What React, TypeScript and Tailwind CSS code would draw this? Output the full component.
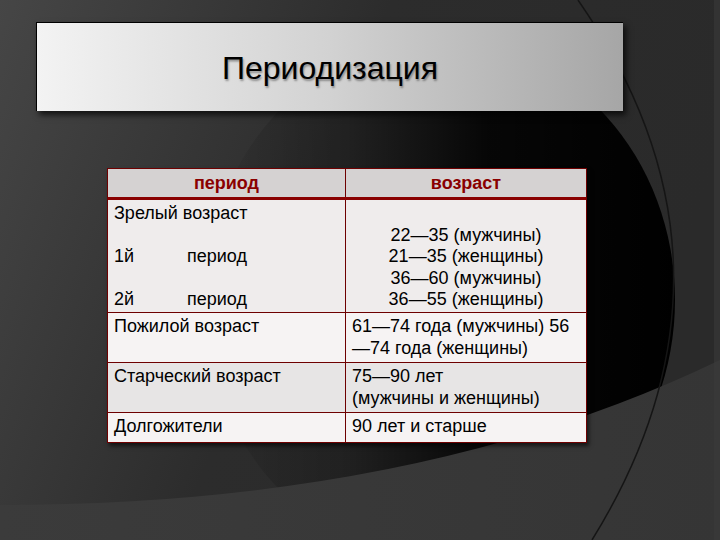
const font = { fontFamily: '"Liberation Sans", Arial, sans-serif' };

function Background() {
  return (
    <svg className="absolute inset-0" width="720" height="540" viewBox="0 0 720 540">
      <defs>
        <linearGradient id="base" x1="0" y1="0" x2="1" y2="0.3">
          <stop offset="0" stopColor="#464646" />
          <stop offset="0.5" stopColor="#2c2c2c" />
          <stop offset="1" stopColor="#2a2a2a" />
        </linearGradient>
        <linearGradient id="blk" x1="0" y1="0" x2="1" y2="0">
          <stop offset="0" stopColor="#000" stopOpacity="0" />
          <stop offset="0.3" stopColor="#000" stopOpacity="0.25" />
          <stop offset="0.6" stopColor="#000" stopOpacity="0.85" />
          <stop offset="1" stopColor="#000" stopOpacity="1" />
        </linearGradient>
        <linearGradient id="low" x1="0" y1="0" x2="1" y2="0">
          <stop offset="0" stopColor="#3b3b3b" />
          <stop offset="1" stopColor="#353535" />
        </linearGradient>
      </defs>
      <rect width="720" height="540" fill="url(#base)" />
      <ellipse cx="440" cy="300" rx="235" ry="260" fill="url(#blk)" />
      <path d="M0 505 Q420 505 720 360 L720 540 L0 540 Z" fill="url(#low)" />
      <path d="M578 0 Q762 265 592 540" fill="none" stroke="#151515" strokeWidth="1.5" />
      <rect x="714" y="0" width="6" height="540" fill="#3c3c3c" opacity="0.5" />
    </svg>
  );
}

function Cell({ children, className = "" }: { children: React.ReactNode; className?: string }) {
  return <div className={`px-[6px] pt-[3px] leading-[21.5px] ${className}`}>{children}</div>;
}

export default function App() {
  return (
    <div className="relative w-[720px] h-[540px] overflow-hidden bg-[#2a2a2a]" style={font}>
      <Background />
      <div className="relative flex flex-col">
        {/* Title */}
        <div className="ml-[36px] mt-[22px] w-[587px] h-[89px] flex items-start justify-center pt-[27px] border-t border-l border-black bg-gradient-to-r from-[#f3f3f3] via-[#d2d2d2] to-[#a6a6a6] shadow-[3px_4px_6px_rgba(0,0,0,0.7)]">
          <h1 className="text-[32px] leading-[36px] text-black [text-shadow:1px_2px_2px_rgba(0,0,0,0.35)]">Периодизация</h1>
        </div>

        {/* Table */}
        <div className="ml-[107px] mt-[57px] w-[480px] border border-[#6e0000] text-[18px] text-black shadow-[2px_3px_4px_rgba(0,0,0,0.6)]">
          <div className="grid grid-cols-[238px_240px] h-[31px] bg-[#d5d2d2] border-b-[3px] border-[#8a0000] text-[#8a0000] font-bold">
            <div className="flex items-center justify-center border-r border-[#6e0000]">период</div>
            <div className="flex items-center justify-center">возраст</div>
          </div>
          <div className="grid grid-cols-[238px_240px] h-[113px] bg-[#efecec] border-b border-[#6e0000]">
            <Cell className="border-r border-[#6e0000]">
              <div>Зрелый возраст</div>
              <div>&nbsp;</div>
              <div className="flex"><span className="w-[73px]">1й</span><span>период</span></div>
              <div>&nbsp;</div>
              <div className="flex"><span className="w-[73px]">2й</span><span>период</span></div>
            </Cell>
            <Cell className="text-center">
              <div>&nbsp;</div>
              <div>22—35 (мужчины)</div>
              <div>21—35 (женщины)</div>
              <div>36—60 (мужчины)</div>
              <div>36—55 (женщины)</div>
            </Cell>
          </div>
          <div className="grid grid-cols-[238px_240px] h-[50px] bg-[#f6f3f3] border-b border-[#6e0000]">
            <Cell className="border-r border-[#6e0000]">Пожилой возраст</Cell>
            <Cell>
              <div>61—74 года (мужчины) 56</div>
              <div>—74 года (женщины)</div>
            </Cell>
          </div>
          <div className="grid grid-cols-[238px_240px] h-[50px] bg-[#e7e5e5] border-b border-[#6e0000]">
            <Cell className="border-r border-[#6e0000]">Старческий возраст</Cell>
            <Cell>
              <div>75—90 лет</div>
              <div>(мужчины и женщины)</div>
            </Cell>
          </div>
          <div className="grid grid-cols-[238px_240px] h-[29px] bg-[#f6f3f3]">
            <Cell className="border-r border-[#6e0000]">Долгожители</Cell>
            <Cell>90 лет и старше</Cell>
          </div>
        </div>
      </div>
    </div>
  );
}
